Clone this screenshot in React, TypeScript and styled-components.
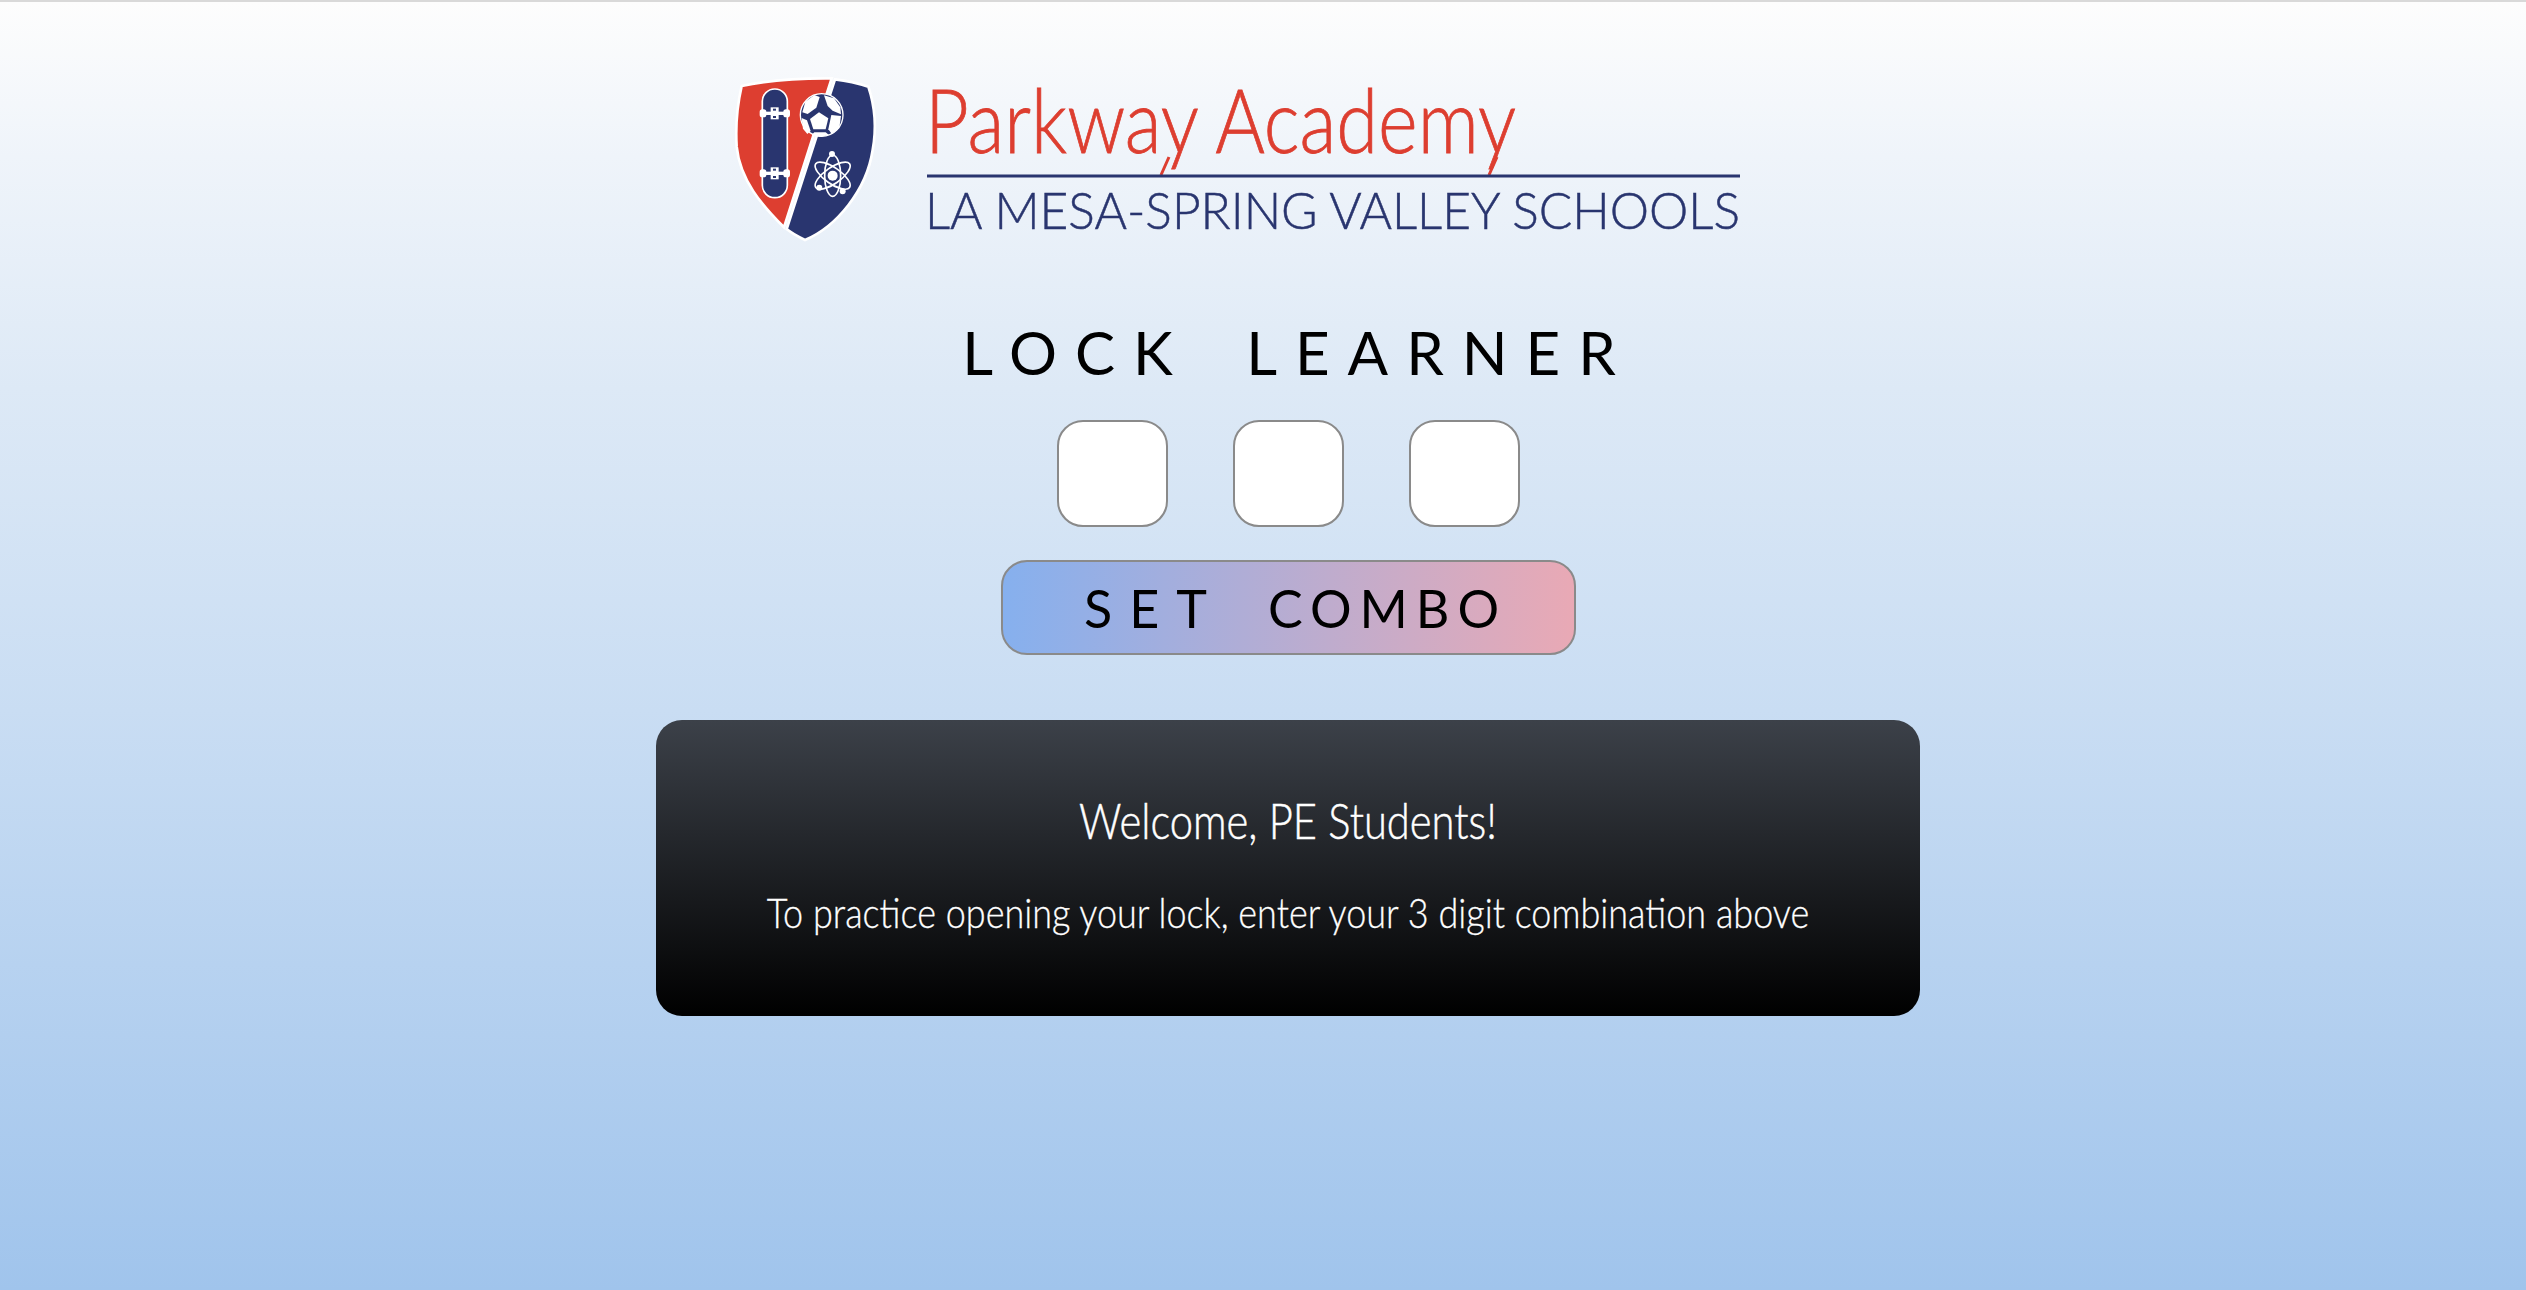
import React from 'react';
import styled, { createGlobalStyle } from 'styled-components';

const GlobalStyle = createGlobalStyle`
  html, body {
    margin: 0;
    padding: 0;
  }
  body {
    font-family: "Lato", "Liberation Sans", sans-serif;
  }
`;

const Page = styled.div`
  box-sizing: border-box;
  height: 1290px;
  padding-left: 50px;
  border-top: 2px solid #d9d9d9;
  background: linear-gradient(
    to bottom,
    #fdfdfd 0%,
    #eff4fa 12%,
    #dde9f6 30%,
    #c9ddf3 55%,
    #a0c4ec 100%
  );
  display: flex;
  flex-direction: column;
  align-items: center;
`;

const Logo = styled.svg`
  display: block;
  width: 1050px;
  height: 200px;
  margin-top: 48px;
  margin-right: 86px;
  flex: none;
  overflow: visible;
`;

const Title = styled.h1`
  margin: 67px 0 0;
  padding-left: 20px;
  font-size: 60px;
  line-height: 70px;
  font-weight: 400;
  letter-spacing: 18px;
  word-spacing: 22px;
  color: #000;
  white-space: nowrap;
`;

const ComboRow = styled.div`
  display: flex;
  gap: 65px;
  margin-top: 33px;
`;

const DigitInput = styled.input`
  box-sizing: border-box;
  width: 111px;
  height: 107px;
  border: 2px solid #8a8a8a;
  border-radius: 26px;
  background: #fff;
  padding: 0;
  outline: none;
`;

const SetButton = styled.button`
  box-sizing: border-box;
  width: 575px;
  height: 95px;
  margin-top: 33px;
  border: 2px solid #8a8a8a;
  border-radius: 26px;
  background: linear-gradient(to right, #86b0ee, #e9a9b5);
  color: #000;
  font-family: inherit;
  font-size: 52px;
  padding: 0 0 0 15px;
  white-space: nowrap;
  display: flex;
  align-items: center;
  justify-content: center;
  gap: 44px;
`;

const ButtonWord = styled.span<{ $spacing: number }>`
  letter-spacing: ${(p) => p.$spacing}px;
`;

const WelcomeCard = styled.section`
  box-sizing: border-box;
  width: 1264px;
  height: 296px;
  margin-top: 65px;
  border-radius: 26px;
  background: linear-gradient(to bottom, #3c4149 0%, #000 100%);
  color: #fff;
  text-align: center;
  padding-top: 69px;
`;

const WelcomeTitle = styled.h2`
  margin: 0;
  font-size: 50px;
  line-height: 62px;
  font-weight: 300;
  white-space: nowrap;
  -webkit-text-stroke: 0.5px #fff;
  transform: scaleX(0.834);
`;

const WelcomeText = styled.p`
  margin: 37px 0 0;
  font-size: 41px;
  line-height: 50px;
  font-weight: 300;
  white-space: nowrap;
  -webkit-text-stroke: 0.3px #fff;
  transform: scaleX(0.878);
`;

const red = '#dd3e30';
const navy = '#29356f';

const Truck = ({ y }: { y: number }) => (
  <g fill="#fff">
    <rect x="152" y={y - 18} width="24" height="14" />
    <rect x="159" y={y - 14} width="9" height="6" fill={navy} />
    <rect x="152" y={y + 4} width="24" height="14" />
    <rect x="159" y={y + 8} width="9" height="6" fill={navy} />
    <rect x="122" y={y - 5} width="84" height="10" />
    <rect x="119" y={y - 12} width="20" height="24" rx="8" />
    <rect x="190" y={y - 12} width="20" height="24" rx="8" />
  </g>
);

const SoccerBall = () => (
  <g>
    <circle cx="305" cy="195" r="64" fill={navy} stroke="#fff" strokeWidth="4" />
    <g fill="#fff">
      <path d="M247 187 L256 155 L283 135 L299 141 L289 173 L263 192 Z" />
      <path d="M312 136 L342 145 L361 172 L363 193 L338 182 L323 168 Z" />
      <path d="M297 187 L325 205 L317 238 L280 238 L270 207 Z" />
      <path d="M245 204 L261 211 L272 243 L262 252 L249 236 Z" />
      <path d="M334 195 L363 198 L358 235 L336 253 L325 238 Z" />
      <path d="M283 247 L317 247 L327 255 L300 261 L275 255 Z" />
    </g>
  </g>
);

const Atom = () => (
  <g>
    <g fill="none" stroke="#fff" strokeWidth="5">
      <ellipse cx="338" cy="377" rx="62" ry="24" transform="rotate(35 338 377)" />
      <ellipse cx="338" cy="377" rx="62" ry="24" transform="rotate(-35 338 377)" />
      <ellipse cx="338" cy="377" rx="62" ry="24" transform="rotate(90 338 377)" />
    </g>
    <circle cx="338" cy="377" r="15" fill="#fff" />
    <circle cx="336" cy="312" r="9" fill="#fff" />
    <circle cx="298" cy="413" r="9" fill="#fff" />
    <circle cx="368" cy="424" r="9" fill="#fff" />
  </g>
);

const ShieldMark = () => (
  <g transform="scale(0.3333)">
    <path
      d="M65 108 C150 90 240 84 335 85 L192 532 C125 465 60 390 50 290 C46 225 52 165 65 108 Z"
      fill={red}
      stroke="#fff"
      strokeWidth="8"
    />
    <path
      d="M345 88 C380 92 415 100 445 110 C465 170 470 235 458 300 C440 420 350 530 255 570 C235 560 215 550 200 537 Z"
      fill={navy}
      stroke="#fff"
      strokeWidth="8"
    />
    <rect x="127" y="117" width="75" height="326" rx="37" fill={navy} stroke="#fff" strokeWidth="5" />
    <Truck y={190} />
    <Truck y={370} />
    <SoccerBall />
    <Atom />
  </g>
);

export default function App() {
  return (
    <>
      <GlobalStyle />
      <Page>
        <Logo viewBox="0 0 1050 200">
          <ShieldMark />
          <text
            x="205"
            y="103"
            textLength="591"
            lengthAdjust="spacingAndGlyphs"
            fill={red}
            stroke={red}
            strokeWidth="0.8"
            fontFamily="Lato, sans-serif"
            fontWeight="300"
            fontSize="88"
          >
            Parkway Academy
          </text>
          <path d="M449 107 L441 125 M777 107 L769 125" stroke={red} strokeWidth="3" />
          <rect x="207" y="124.5" width="813" height="3" fill={navy} />
          <text
            x="205"
            y="179"
            textLength="815"
            lengthAdjust="spacingAndGlyphs"
            fill={navy}
            stroke={navy}
            strokeWidth="0.5"
            fontFamily="Lato, sans-serif"
            fontWeight="300"
            fontSize="52"
          >
            LA MESA-SPRING VALLEY SCHOOLS
          </text>
        </Logo>
        <Title>LOCK LEARNER</Title>
        <ComboRow>
          <DigitInput aria-label="first digit" />
          <DigitInput aria-label="second digit" />
          <DigitInput aria-label="third digit" />
        </ComboRow>
        <SetButton>
          <ButtonWord $spacing={17}>SET</ButtonWord>
          <ButtonWord $spacing={8}>COMBO</ButtonWord>
        </SetButton>
        <WelcomeCard>
          <WelcomeTitle>Welcome, PE Students!</WelcomeTitle>
          <WelcomeText>To practice opening your lock, enter your 3 digit combination above</WelcomeText>
        </WelcomeCard>
      </Page>
    </>
  );
}
